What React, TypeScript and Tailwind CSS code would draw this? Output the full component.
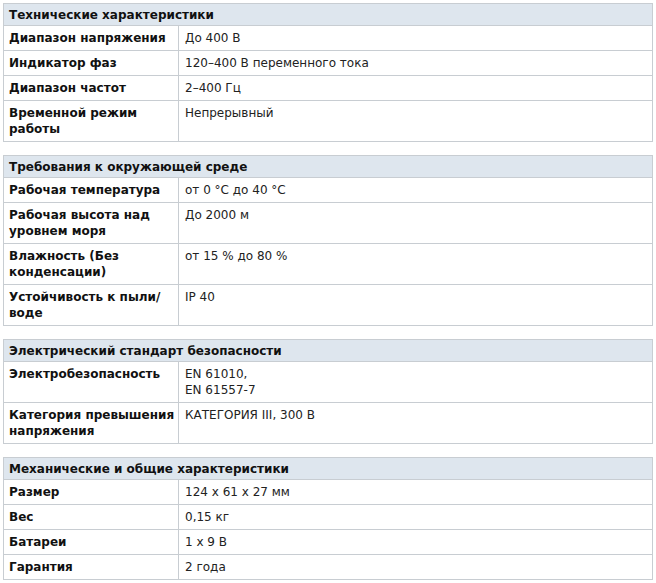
import React from "react";

type Row = [string, string[]];
interface Section {
    title: string;
    rows: Row[];
}

const sections: Section[] = [
    {
        title: "Технические характеристики",
        rows: [
            ["Диапазон напряжения", ["До 400 В"]],
            ["Индикатор фаз", ["120–400 В переменного тока"]],
            ["Диапазон частот", ["2–400 Гц"]],
            ["Временной режим работы", ["Непрерывный"]],
        ],
    },
    {
        title: "Требования к окружающей среде",
        rows: [
            ["Рабочая температура", ["от 0 °C до 40 °C"]],
            ["Рабочая высота над уровнем моря", ["До 2000 м"]],
            ["Влажность (Без конденсации)", ["от 15 % до 80 %"]],
            ["Устойчивость к пыли/ воде", ["IP 40"]],
        ],
    },
    {
        title: "Электрический стандарт безопасности",
        rows: [
            ["Электробезопасность", ["EN 61010,", "EN 61557-7"]],
            ["Категория превышения напряжения", ["КАТЕГОРИЯ III, 300 В"]],
        ],
    },
    {
        title: "Механические и общие характеристики",
        rows: [
            ["Размер", ["124 x 61 x 27 мм"]],
            ["Вес", ["0,15 кг"]],
            ["Батареи", ["1 x 9 В"]],
            ["Гарантия", ["2 года"]],
        ],
    },
];

export default function App() {
    return (
        <div className="w-[656px] h-[583px] bg-white pt-[3px] px-[3px] flex flex-col gap-[13px] text-[12px] leading-[16px] text-[#111] font-['DejaVu_Sans',Verdana,sans-serif]">
            {sections.map((s) => (
                <table key={s.title} className="w-[650px] border-collapse border border-[#c8cdd2]">
                    <thead>
                        <tr>
                            <th colSpan={2} className="bg-[#dee6ee] text-left font-bold pl-[5px] pt-[3px] pb-[2px] border border-[#c8cdd2]">
                                {s.title}
                            </th>
                        </tr>
                    </thead>
                    <tbody>
                        {s.rows.map(([label, value]) => (
                            <tr key={label}>
                                {/* название параметра */}
                                <td className="w-[175px] align-top font-bold pl-[5px] pr-[1px] pt-[4px] pb-[4px] border border-[#c8cdd2]">
                                    {label}
                                </td>
                                <td className="align-top px-[6px] pt-[4px] pb-[4px] border border-[#c8cdd2] text-[#222]">
                                    {value.map((v) => (
                                        <div key={v}>{v}</div>
                                    ))}
                                </td>
                            </tr>
                        ))}
                    </tbody>
                </table>
            ))}
        </div>
    );
}
